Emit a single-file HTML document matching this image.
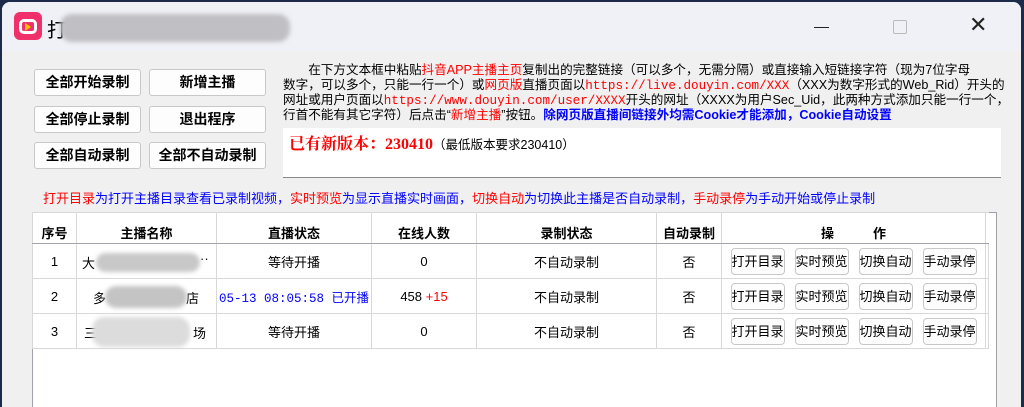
<!DOCTYPE html>
<html><head><meta charset="utf-8"><style>
*{margin:0;padding:0;box-sizing:border-box}
body{width:1024px;height:407px;overflow:hidden;background:#1e2a4a;font-family:"Liberation Sans","Noto Sans CJK SC",sans-serif;font-size:13px;color:#000;position:relative}
.win{position:absolute;left:2px;top:2px;width:1019px;height:405px;background:#f0f0f0;border-radius:8px 8px 0 0;overflow:hidden}
.tb{position:absolute;left:0;top:0;width:100%;height:49px;background:#eff1f6}
.a{position:absolute;white-space:nowrap}
.btn{position:absolute;background:#fdfdfd;border:1px solid #c8c8c8;border-radius:3px;font-weight:bold;font-size:14px;text-align:center;line-height:24px}
.ln{position:absolute;left:281px;white-space:nowrap;font-size:12.6px;line-height:15px;font-family:"Liberation Sans","Noto Sans CJK SC",sans-serif}
.r{color:#f00}.b{color:#00f}
.mono{font-family:"Liberation Mono",monospace;font-size:12.6px}
table{border-collapse:collapse;background:#fff;position:absolute;left:30px;top:210px;width:956px;table-layout:fixed}
td,th{border:1px solid #d8d8d8;text-align:center;font-size:13px;font-weight:normal;white-space:nowrap;overflow:hidden;padding:0}
th{height:31px;font-weight:bold;padding-top:8px;border-bottom:1px solid #a0a4aa}
td{height:35px}
.ob{display:inline-block;width:54px;height:27px;border:1px solid #c8c8c8;border-radius:4px;line-height:25px;font-size:13px;margin:0 5px;background:#fdfdfd;vertical-align:middle}
.blur{position:absolute;background:#d6d6d6;border-radius:12px;filter:blur(2px)}
</style></head><body>
<div class="win">
<div class="tb">
 <div class="a" style="left:12px;top:10px;width:28px;height:28px;background:#f0306a;border-radius:6px"></div>
 <div class="a" style="left:17px;top:17px;width:18px;height:15px;border:3px solid #fff;border-radius:5px"></div>
 <div class="a" style="left:23px;top:21px;width:0;height:0;border-left:6px solid #f5c400;border-top:4px solid transparent;border-bottom:4px solid transparent"></div>
 <div class="a" style="left:45px;top:12px;font-size:20px">打</div>
 <div class="blur" style="left:58px;top:12px;width:230px;height:28px;background:#c0c0c4"></div>
 <div class="a" style="left:812px;top:25px;width:15px;height:1px;background:#222"></div>
 <div class="a" style="left:891px;top:18px;width:14px;height:14px;border:1px solid #bbb;border-radius:2px"></div>
 <div class="a" style="left:967px;top:10px;font-size:22px;color:#222">✕</div>
</div>
<div class="btn" style="left:32px;top:67px;width:107px;height:27px">全部开始录制</div>
<div class="btn" style="left:147px;top:67px;width:117px;height:27px">新增主播</div>
<div class="btn" style="left:32px;top:104px;width:107px;height:27px">全部停止录制</div>
<div class="btn" style="left:147px;top:104px;width:117px;height:27px">退出程序</div>
<div class="btn" style="left:32px;top:140px;width:107px;height:27px">全部自动录制</div>
<div class="btn" style="left:147px;top:140px;width:117px;height:27px">全部不自动录制</div>
<div class="ln" style="top:61px">&emsp;&emsp;在下方文本框中粘贴<span class="r">抖音APP主播主页</span>复制出的完整链接（可以多个，无需分隔）或直接输入短链接字符（现为7位字母</div>
<div class="ln" style="top:76px">数字，可以多个，只能一行一个）或<span class="r">网页版</span>直播页面以<span class="r mono">https://live.douyin.com/XXX</span>（XXX为数字形式的Web_Rid）开头的</div>
<div class="ln" style="top:91px">网址或用户页面以<span class="r mono">https://www.douyin.com/user/XXXX</span>开头的网址（XXXX为用户Sec_Uid，此两种方式添加只能一行一个，</div>
<div class="ln" style="top:106px">行首不能有其它字符）后点击“<span class="r">新增主播</span>”按钮。<b class="b">除网页版直播间链接外均需Cookie才能添加，Cookie自动设置</b></div>
<div class="a" style="left:281px;top:126px;width:718px;height:50px;background:#fff;border-bottom:1px solid #888"></div>
<div class="a" style="left:287px;top:129px;font-size:16px"><b class="r" style="font-family:'Liberation Serif','Noto Serif CJK SC',serif">已有新版本：230410</b><span style="font-size:12.5px">（最低版本要求230410）</span></div>
<div class="a" style="left:41px;top:186px;font-size:13px;color:#00f"><span class="r">打开目录</span>为打开主播目录查看已录制视频，<span class="r">实时预览</span>为显示直播实时画面，<span class="r">切换自动</span>为切换此主播是否自动录制，<span class="r">手动录停</span>为手动开始或停止录制</div>
<div class="a" style="left:30px;top:210px;width:965px;height:200px;background:#fff;border:1px solid #a0a4aa"></div>
<table>
<colgroup><col style="width:44px"><col style="width:140px"><col style="width:155px"><col style="width:105px"><col style="width:180px"><col style="width:65px"><col style="width:264px"><col style="width:3px"></colgroup>
<tr><th>序号</th><th>主播名称</th><th>直播状态</th><th>在线人数</th><th>录制状态</th><th>自动录制</th><th>操&emsp;&emsp;&emsp;作</th><th style="border-right:none"></th></tr>
<tr><td>1</td><td></td><td>等待开播</td><td>0</td><td>不自动录制</td><td>否</td><td><span class="ob">打开目录</span><span class="ob">实时预览</span><span class="ob">切换自动</span><span class="ob">手动录停</span></td><td></td></tr>
<tr><td>2</td><td></td><td class="b mono" style="font-size:12.5px">05-13 08:05:58 已开播</td><td>458 <span class="r">+15</span></td><td>不自动录制</td><td>否</td><td><span class="ob">打开目录</span><span class="ob">实时预览</span><span class="ob">切换自动</span><span class="ob">手动录停</span></td><td></td></tr>
<tr><td>3</td><td></td><td>等待开播</td><td>0</td><td>不自动录制</td><td>否</td><td><span class="ob">打开目录</span><span class="ob">实时预览</span><span class="ob">切换自动</span><span class="ob">手动录停</span></td><td></td></tr>
</table>
<div class="a" style="left:80px;top:251px">大</div>
<div class="a" style="left:198px;top:249px">··</div>
<div class="a" style="left:91px;top:286px">多</div>
<div class="a" style="left:184px;top:286px">店</div>
<div class="a" style="left:82px;top:321px">三</div>
<div class="a" style="left:191px;top:321px">场</div>
<div class="blur" style="left:94px;top:251px;width:104px;height:19px;background:#c8c8c8"></div>
<div class="blur" style="left:103px;top:284px;width:82px;height:22px;background:#c4c4c4"></div>
<div class="blur" style="left:90px;top:315px;width:98px;height:30px;background:#dcdcdc"></div>
</div>
</body></html>
